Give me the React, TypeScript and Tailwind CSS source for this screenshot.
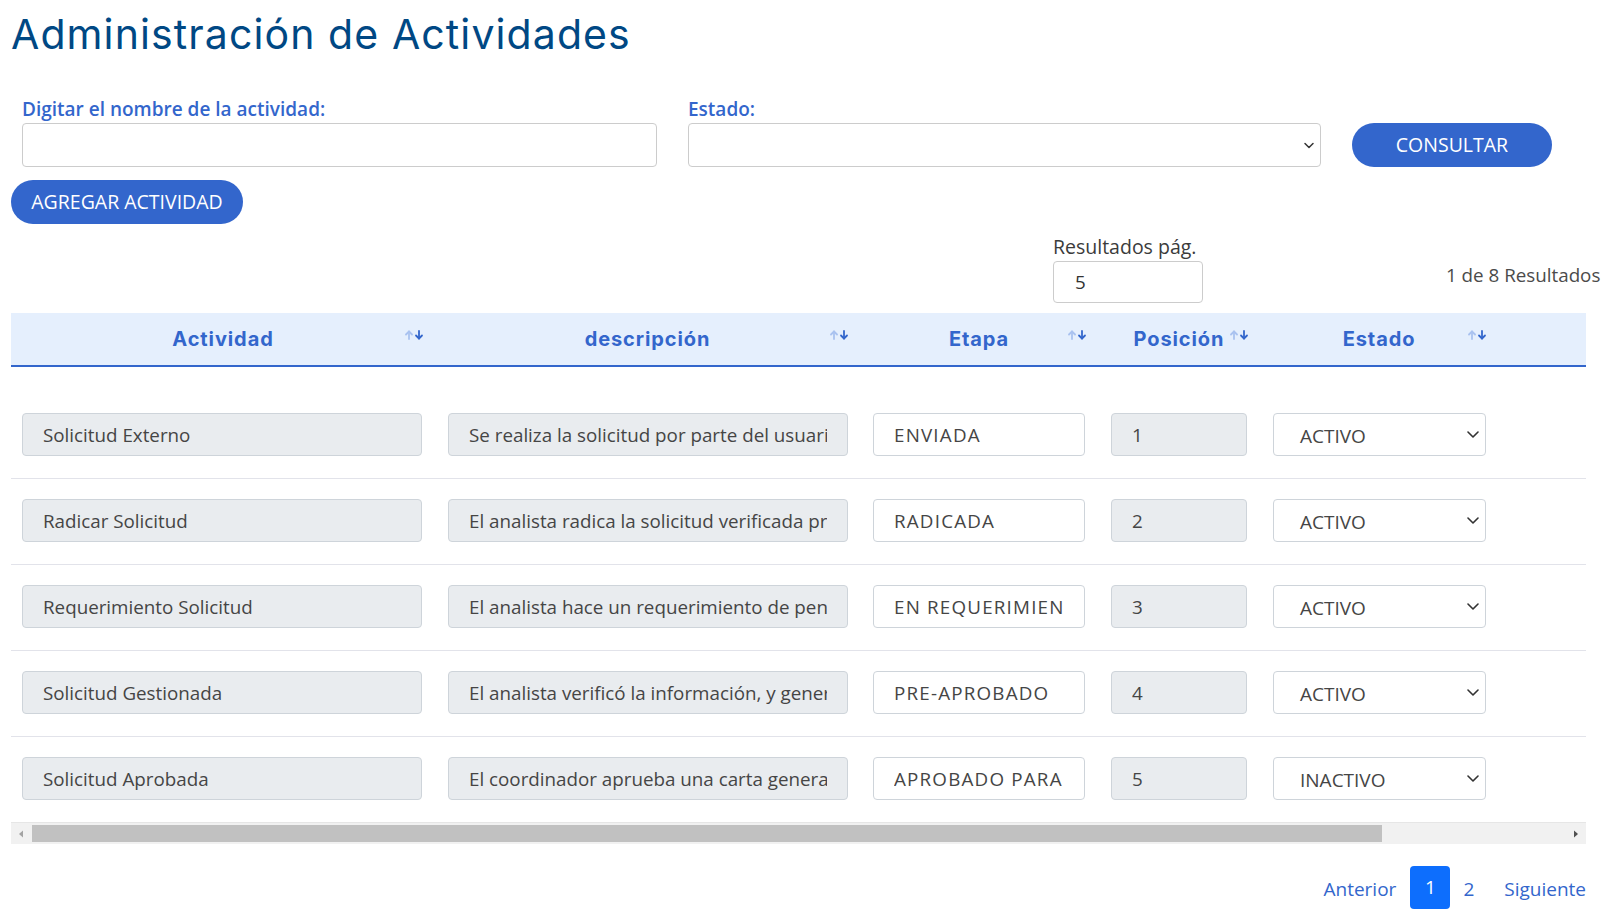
const rows = [
  { actividad: 'Solicitud Externo', descripcion: 'Se realiza la solicitud por parte del usuario externo', etapa: 'ENVIADA', posicion: '1', estado: 'ACTIVO' },
  { actividad: 'Radicar Solicitud', descripcion: 'El analista radica la solicitud verificada previamente', etapa: 'RADICADA', posicion: '2', estado: 'ACTIVO' },
  { actividad: 'Requerimiento Solicitud', descripcion: 'El analista hace un requerimiento de pendientes al usuario', etapa: 'EN REQUERIMIENTO', posicion: '3', estado: 'ACTIVO' },
  { actividad: 'Solicitud Gestionada', descripcion: 'El analista verificó la información, y genera la carta', etapa: 'PRE-APROBADO', posicion: '4', estado: 'ACTIVO' },
  { actividad: 'Solicitud Aprobada', descripcion: 'El coordinador aprueba una carta generada por el analista', etapa: 'APROBADO PARA FIRMA', posicion: '5', estado: 'INACTIVO' },
];

const columns = ['Actividad', 'descripción', 'Etapa', 'Posición', 'Estado'];

function SortIcon() {
  return (
    <svg width="19" height="10" viewBox="0 0 19 10" fill="none" strokeWidth="1.8" strokeLinecap="round" strokeLinejoin="round">
      <g stroke="#a9c2f0">
        <path d="M4 9V1.5" />
        <path d="M1 4.5L4 1.5L7 4.5" />
      </g>
      <g stroke="#3366cc">
        <path d="M14 1V8.5" />
        <path d="M11 5.5L14 8.5L17 5.5" />
      </g>
    </svg>
  );
}

function Chevron() {
  return (
    <svg width="12" height="7" viewBox="0 0 12 7" fill="none">
      <path d="M1 1L6 6L11 1" stroke="#333" strokeWidth="1.6" strokeLinecap="round" strokeLinejoin="round" />
    </svg>
  );
}

function Field({ text, gray, width, tracking }: { text: string; gray?: boolean; width: string; tracking?: boolean }) {
  return (
    <div className={`${width} h-[43px] rounded border border-[#ced4da] px-[20px] flex items-center ${gray ? 'bg-[#e9ecef]' : 'bg-white'}`}>
      <div className={`overflow-hidden whitespace-nowrap pt-[2px] text-[18.8px] text-[#454545] ${tracking ? 'tracking-[1.2px]' : ''}`}>
        {text}
      </div>
    </div>
  );
}

export default function App() {
  return (
    <div className="min-h-screen bg-white font-['Open_Sans',sans-serif] text-[#454545]">
      {/* Title */}
      <h1 className="mt-[10px] pl-[11px] h-[48px] leading-[48px] text-[41px] tracking-[1.1px] font-['Inter',sans-serif] text-[#004884]">
        Administración de Actividades
      </h1>

      {/* Filters */}
      <div className="mt-[38px] pl-[22px] flex items-end gap-[31px]">
        <div className="w-[635px]">
          <div className="h-[27px] leading-[27px] text-[19px] font-semibold text-[#3366cc]">Digitar el nombre de la actividad:</div>
          <div className="h-[44px] rounded border border-[#cccccc] bg-white" />
        </div>
        <div className="w-[633px]">
          <div className="h-[27px] leading-[27px] text-[19px] font-semibold text-[#3366cc]">Estado:</div>
          <div className="h-[44px] rounded border border-[#cccccc] bg-white flex items-center justify-end pr-[5px]">
            <svg width="12" height="7" viewBox="0 0 12 7" fill="none">
              <path d="M2 1.5L6 5.5L10 1.5" stroke="#333" strokeWidth="1.5" strokeLinecap="round" strokeLinejoin="round" />
            </svg>
          </div>
        </div>
        <button className="w-[200px] h-[44px] rounded-full bg-[#3366cc] text-white text-[19.5px]">CONSULTAR</button>
      </div>

      <div className="mt-[13px] pl-[11px]">
        <button className="w-[232px] h-[44px] rounded-full bg-[#3366cc] text-white text-[19.5px]">AGREGAR ACTIVIDAD</button>
      </div>

      {/* Results per page */}
      <div className="mt-[10px] flex items-center">
        <div className="ml-[1053px] w-[150px]">
          <div className="h-[27px] leading-[26px] text-[19.5px] font-medium text-[#3b3b3b] whitespace-nowrap">Resultados pág.</div>
          <div className="h-[42px] rounded border border-[#cccccc] pl-[21px] flex items-center text-[18.8px] text-[#333]">5</div>
        </div>
        <div className="ml-[243px] pt-[14px] text-[18.8px] text-[#4b4b4b] whitespace-nowrap">1 de 8 Resultados</div>
      </div>

      {/* Table */}
      <div className="mt-[10px] mx-[11px] w-[1575px] overflow-hidden">
        <div className="grid grid-cols-[424px_425px_238px_162px_238px_1fr] h-[54px] bg-[#e5effd] border-b-2 border-[#3366cc]">
          {columns.map((c) => (
            <div key={c} className="relative flex items-center justify-center">
              <span className="font-['Inter',sans-serif] font-bold text-[20px] tracking-[0.9px] text-[#3366cc]">{c}</span>
              <span className="absolute right-[11px] top-[17px]">
                <SortIcon />
              </span>
            </div>
          ))}
          <div />
        </div>
        <div className="h-[26px]" />
        {rows.map((r, i) => (
          <div
            key={r.posicion}
            className={`grid grid-cols-[424px_425px_238px_162px_238px_1fr] pt-[20px] pb-[22px] ${i < rows.length - 1 ? 'border-b border-[#e2e3ea]' : ''}`}
          >
            <div className="pl-[11px]"><Field text={r.actividad} gray width="w-[400px]" /></div>
            <div className="pl-[13px]"><Field text={r.descripcion} gray width="w-[400px]" /></div>
            <div className="pl-[13px]"><Field text={r.etapa} width="w-[212px]" tracking /></div>
            <div className="pl-[13px]"><Field text={r.posicion} gray width="w-[136px]" /></div>
            <div className="pl-[13px]">
              <div className="w-[213px] h-[43px] rounded border border-[#ced4da] bg-white pl-[26px] pr-[6px] flex items-center justify-between">
                <span className="pt-[3px] text-[19px] text-[#454545]">{r.estado}</span>
                <Chevron />
              </div>
            </div>
            <div />
          </div>
        ))}

        {/* Horizontal scrollbar */}
        <div className="h-[22px] bg-[#f1f1f1] border-t border-[#e6e6e6] flex items-center">
          <svg width="21" height="10" viewBox="0 0 21 10" className="shrink-0">
            <path d="M12 1.5L8 5L12 8.5Z" fill="#a3a3a3" />
          </svg>
          <div className="w-[1350px] h-[17px] bg-[#c1c1c1]" />
          <div className="flex-1" />
          <svg width="21" height="10" viewBox="0 0 21 10" className="shrink-0">
            <path d="M9 1.5L13 5L9 8.5Z" fill="#505050" />
          </svg>
        </div>
      </div>

      {/* Pagination */}
      <div className="mt-[22px] pr-[21px] flex items-center justify-end text-[19px] text-[#3366cc]">
        <a className="cursor-pointer pt-[3px]">Anterior</a>
        <a className="ml-[14px] w-[40px] h-[43px] rounded bg-[#0d6efd] text-white flex items-center justify-center">1</a>
        <a className="ml-[13px] cursor-pointer pt-[3px]">2</a>
        <a className="ml-[30px] cursor-pointer pt-[3px]">Siguiente</a>
      </div>
    </div>
  );
}
